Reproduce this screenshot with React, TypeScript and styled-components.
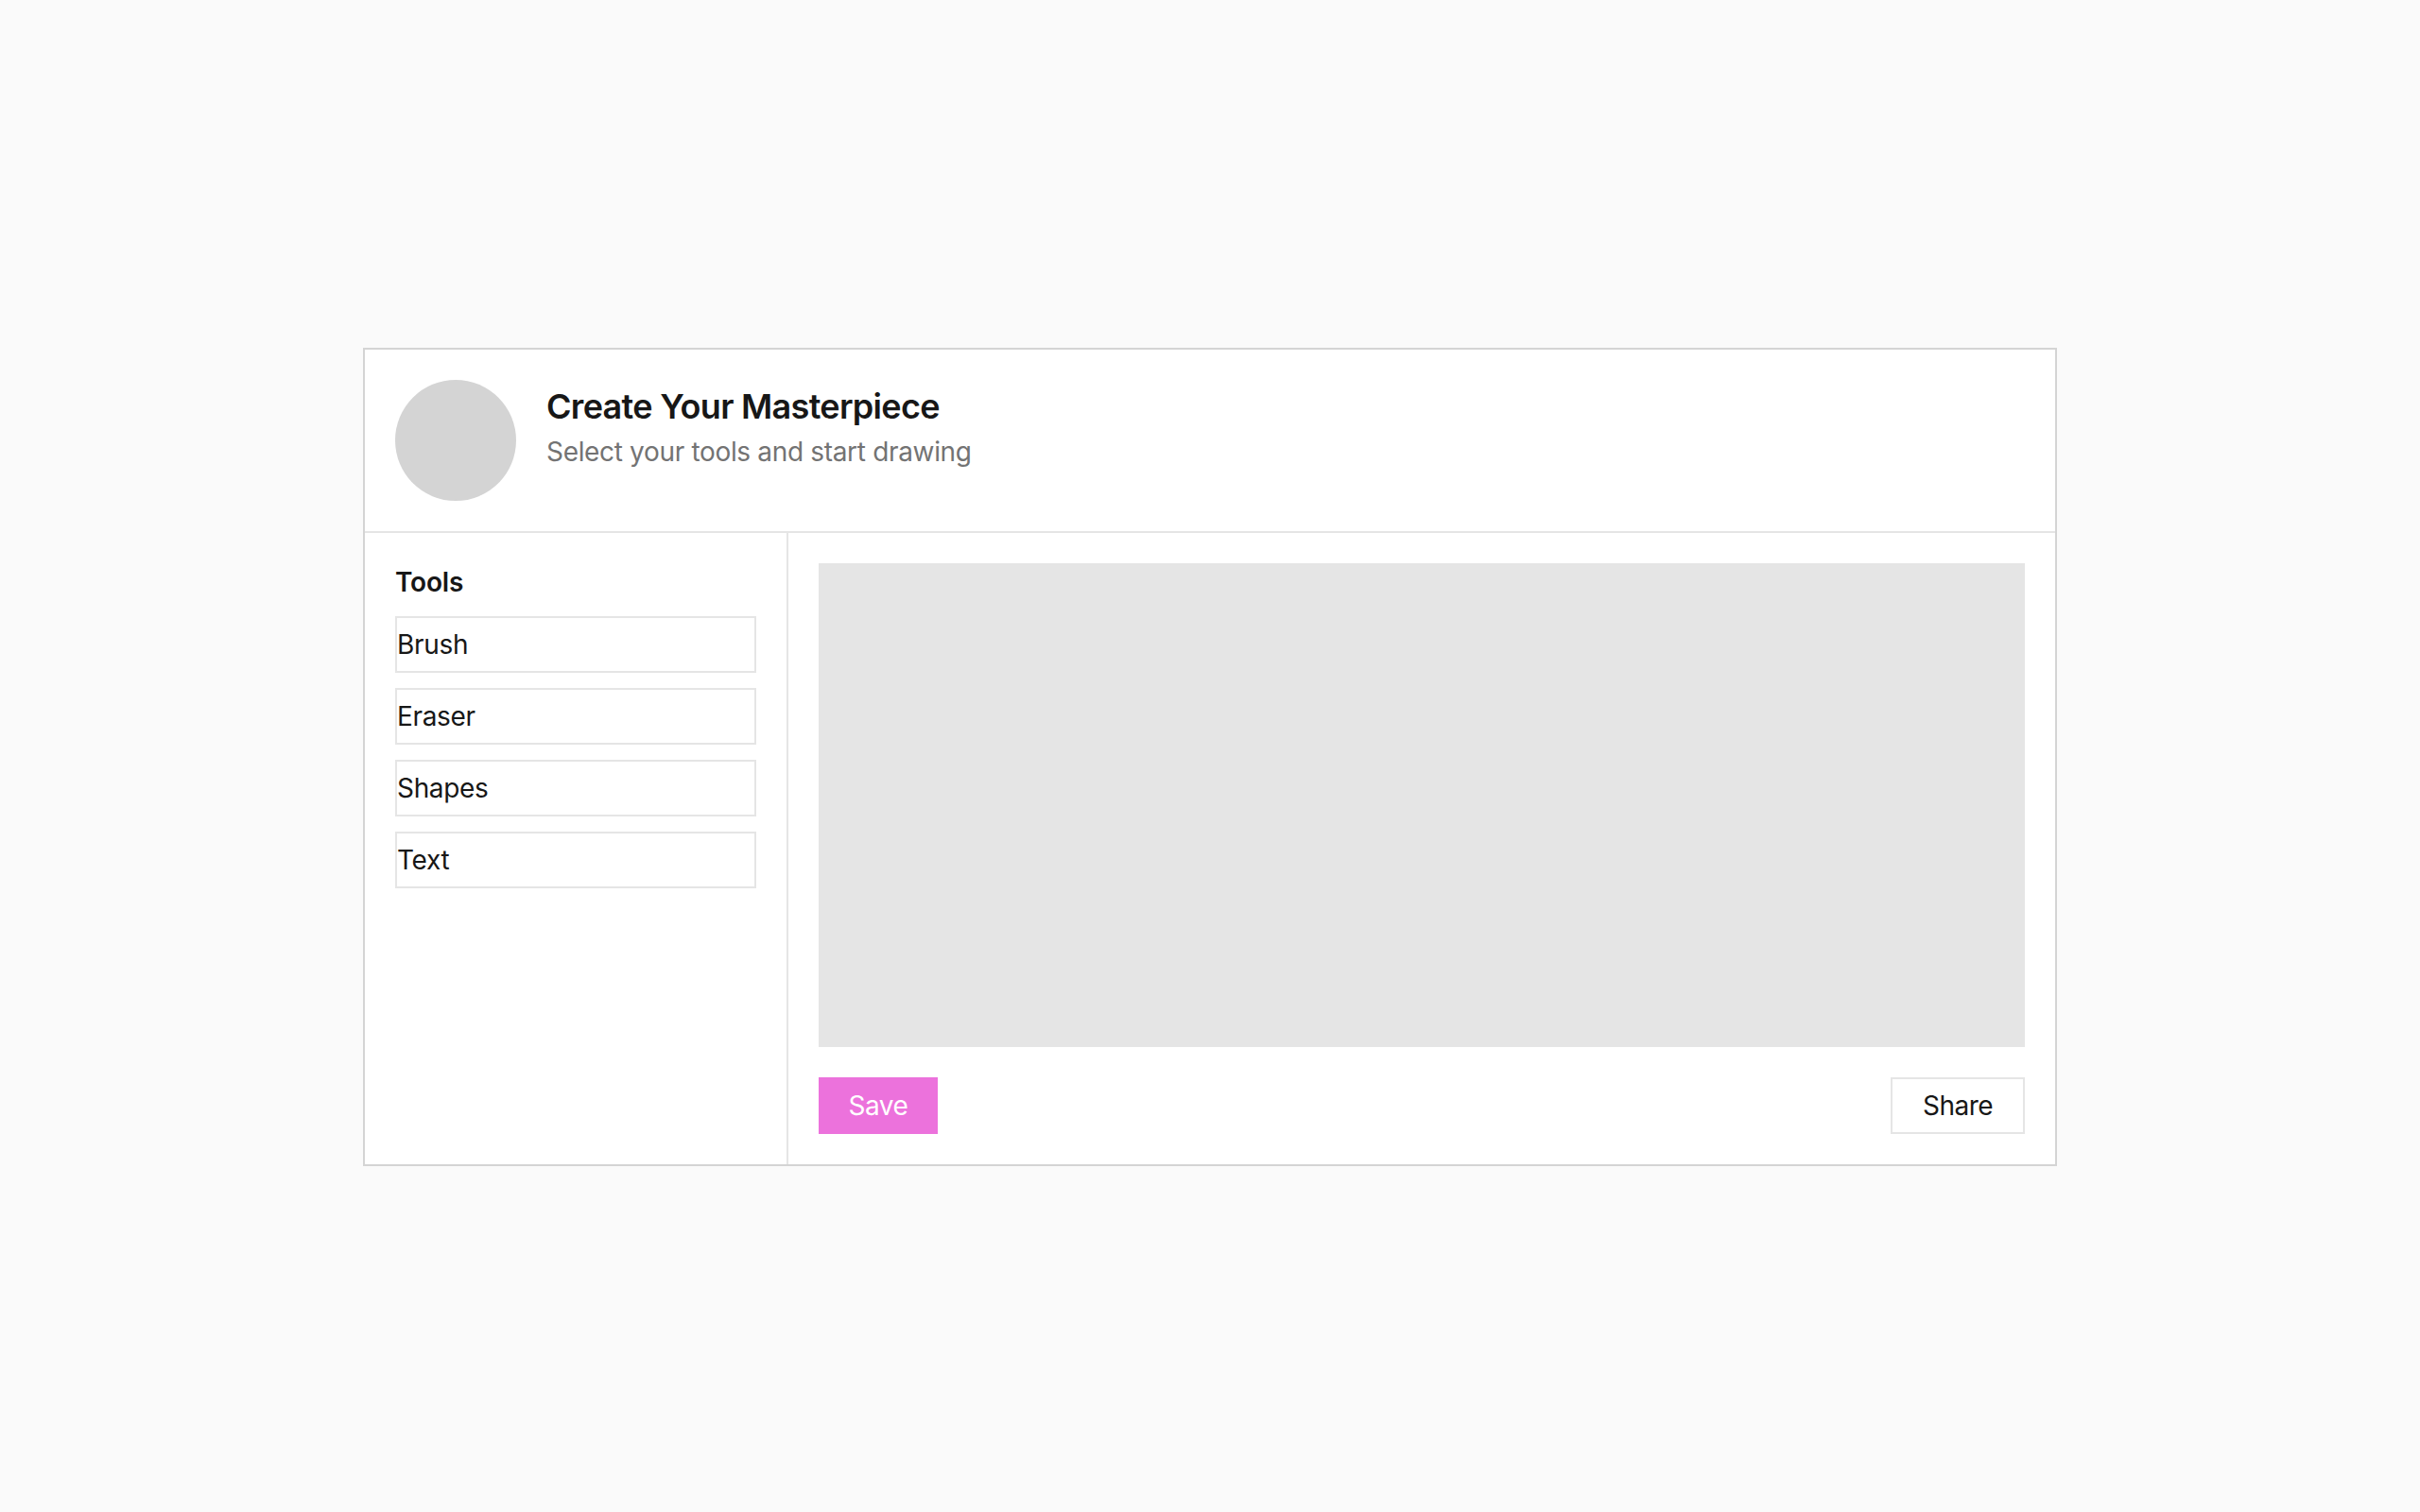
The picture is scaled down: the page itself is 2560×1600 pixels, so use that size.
import React from "react";
import styled, { createGlobalStyle } from "styled-components";

const tools = ["Brush", "Eraser", "Shapes", "Text"];

const App = () => {
  return (
    <>
      <GlobalStyle />
      <Page>
        <Card>
          <Header>
            <Avatar />
            <div>
              <Title>Create Your Masterpiece</Title>
              <Subtitle>Select your tools and start drawing</Subtitle>
            </div>
          </Header>
          <Body>
            <Sidebar>
              <SidebarTitle>Tools</SidebarTitle>
              <ToolList>
                {tools.map((tool) => (
                  <ToolItem key={tool}>{tool}</ToolItem>
                ))}
              </ToolList>
            </Sidebar>
            <Main>
              <Canvas />
              <Actions>
                <SaveButton>Save</SaveButton>
                <ShareButton>Share</ShareButton>
              </Actions>
            </Main>
          </Body>
        </Card>
      </Page>
    </>
  );
};

export default App;

const GlobalStyle = createGlobalStyle`
  * {
    box-sizing: border-box;
  }
  body {
    margin: 0;
    background: #fafafa;
    color: #171717;
    font-family: Inter, "Liberation Sans", sans-serif;
    -webkit-font-smoothing: antialiased;
  }
`;

const Page = styled.div`
  min-height: 1600px;
  display: flex;
  align-items: center;
  justify-content: center;
  padding-top: 2px;
`;

const Card = styled.div`
  width: 1792px;
  background: #ffffff;
  border: 2px solid #d4d4d4;
`;

const Header = styled.header`
  display: flex;
  gap: 32px;
  padding: 32px;
  border-bottom: 2px solid #e5e5e5;
`;

const Avatar = styled.div`
  width: 128px;
  height: 128px;
  border-radius: 50%;
  background: #d4d4d4;
`;

const Title = styled.h1`
  margin: 0;
  font-size: 36px;
  line-height: 56px;
  font-weight: 600;
  letter-spacing: -0.7px;
  color: #171717;
`;

const Subtitle = styled.p`
  margin: 0;
  font-size: 28px;
  line-height: 40px;
  letter-spacing: -0.33px;
  color: #737373;
`;

const Body = styled.div`
  display: flex;
`;

const Sidebar = styled.aside`
  width: 448px;
  padding: 32px;
  border-right: 2px solid #e5e5e5;
`;

const SidebarTitle = styled.h2`
  margin: 0 0 16px;
  font-size: 28px;
  line-height: 40px;
  font-weight: 600;
  letter-spacing: -0.2px;
`;

const ToolList = styled.div`
  display: flex;
  flex-direction: column;
  gap: 16px;
`;

const ToolItem = styled.div`
  height: 60px;
  padding: 8px 0;
  border: 2px solid #e5e5e5;
  font-size: 28px;
  line-height: 40px;
  letter-spacing: -0.33px;
`;

const Main = styled.main`
  flex: 1;
  padding: 32px;
`;

const Canvas = styled.div`
  height: 512px;
  margin-bottom: 32px;
  background: #e5e5e5;
`;

const Actions = styled.div`
  display: flex;
  justify-content: space-between;
`;

const SaveButton = styled.button`
  width: 126px;
  height: 60px;
  padding: 0;
  border: none;
  background: #ec72dc;
  color: #ffffff;
  font-family: inherit;
  font-size: 28px;
  line-height: 40px;
  letter-spacing: -0.5px;
`;

const ShareButton = styled.button`
  width: 142px;
  height: 60px;
  padding: 0;
  border: 2px solid #e5e5e5;
  background: #ffffff;
  color: #171717;
  font-family: inherit;
  font-size: 28px;
  line-height: 40px;
  letter-spacing: -0.5px;
`;
